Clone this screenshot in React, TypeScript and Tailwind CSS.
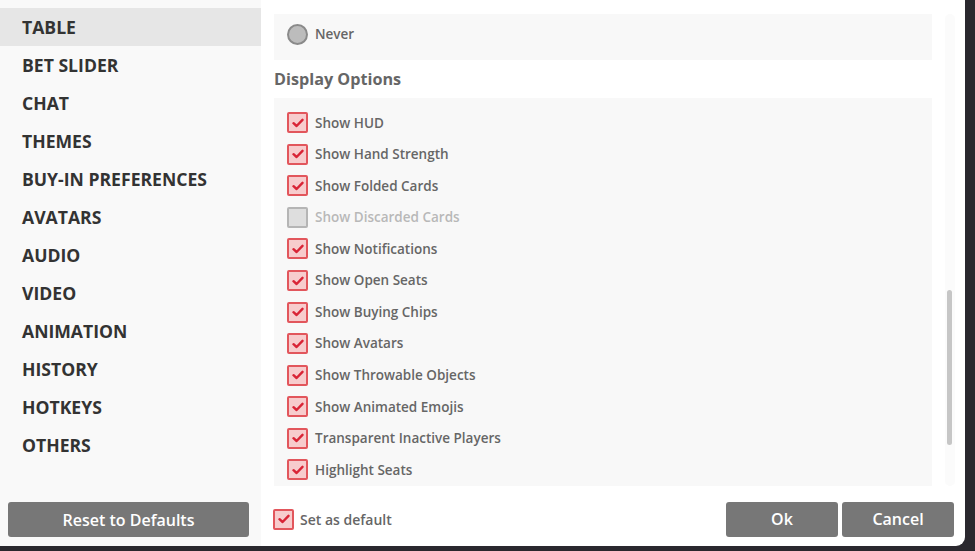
import React from "react"

const menu = [
  "TABLE",
  "BET SLIDER",
  "CHAT",
  "THEMES",
  "BUY-IN PREFERENCES",
  "AVATARS",
  "AUDIO",
  "VIDEO",
  "ANIMATION",
  "HISTORY",
  "HOTKEYS",
  "OTHERS",
]

const options: { label: string; checked: boolean; disabled?: boolean }[] = [
  { label: "Show HUD", checked: true },
  { label: "Show Hand Strength", checked: true },
  { label: "Show Folded Cards", checked: true },
  { label: "Show Discarded Cards", checked: false, disabled: true },
  { label: "Show Notifications", checked: true },
  { label: "Show Open Seats", checked: true },
  { label: "Show Buying Chips", checked: true },
  { label: "Show Avatars", checked: true },
  { label: "Show Throwable Objects", checked: true },
  { label: "Show Animated Emojis", checked: true },
  { label: "Transparent Inactive Players", checked: true },
  { label: "Highlight Seats", checked: true },
]

function Checkbox({ checked, disabled }: { checked: boolean; disabled?: boolean }) {
  if (disabled) {
    return <div className="w-[21px] h-[21px] border-2 border-[#b5b5b5] bg-[#dedede] rounded-[2px]" />
  }
  return (
    <div className="w-[21px] h-[21px] border-2 border-[#e2565c] bg-[#f7cccd] rounded-[2px] flex items-center justify-center">
      {checked && (
        <svg width="12" height="10" viewBox="0 0 12 10">
          <path d="M1.5 5.2 L4.6 8 L10.5 1.8" fill="none" stroke="#d92436" strokeWidth="2.4" strokeLinecap="round" strokeLinejoin="round" />
        </svg>
      )}
    </div>
  )
}

export default function App() {
  return (
    <div className="w-[975px] h-[551px] bg-[#2a282e] overflow-hidden" style={{ fontFamily: '"Open Sans", sans-serif' }}>
      <div className="w-[965px] h-[546px] bg-white rounded-br-[9px] flex overflow-hidden">
        {/* Sidebar */}
        <div className="w-[261px] bg-[#f9f9f9] flex flex-col pt-[8px]">
          {menu.map((m, i) => (
            <div
              key={m}
              className={
                "h-[38px] flex items-center px-[22px] text-[17.6px] font-bold text-[#333] " +
                (i === 0 ? "bg-[#e6e6e6]" : "")
              }
            >
              {m}
            </div>
          ))}
          <div className="mt-auto px-[8px] pb-[9px]">
            <button className="w-[241px] h-[35px] bg-[#777] rounded-[3px] text-white text-[16px] font-semibold">
              Reset to Defaults
            </button>
          </div>
        </div>

        {/* Main */}
        <div className="flex-1 flex flex-col">
          <div className="flex h-[490px]">
            <div className="w-[671px] pl-[13px] pt-[14px]">
              <div className="h-[46px] bg-[#f8f8f8] flex items-center px-[13px] pb-[5px] gap-[7px]">
                <div className="w-[21px] h-[21px] rounded-full border-2 border-[#8a8a8a] bg-[#bcbcbc]" />
                <span className="text-[13.5px] font-semibold text-[#666]">Never</span>
              </div>
              <div className="h-[38px] flex items-center text-[16.2px] font-bold text-[#666]">Display Options</div>
              <div className="h-[388px] bg-[#f8f8f8] pt-[9px] px-[13px]">
                {options.map((o) => (
                  <div key={o.label} className="h-[31.55px] flex items-center gap-[7px]">
                    <Checkbox checked={o.checked} disabled={o.disabled} />
                    <span className={"text-[13.5px] font-semibold " + (o.disabled ? "text-[#b8b8b8]" : "text-[#666]")}>
                      {o.label}
                    </span>
                  </div>
                ))}
              </div>
            </div>
            <div className="w-[33px] flex justify-center pl-[2px] pt-[14px] pb-[4px]">
              <div className="w-[10px] h-full bg-[#fbfbfb] rounded-full pt-[276px]">
                <div className="mx-auto w-[5px] h-[155px] bg-[#c6c6c6] rounded-full" />
              </div>
            </div>
          </div>
          <div className="flex-1 flex items-center pl-[12px] pr-[11px] pt-[2px]">
            <Checkbox checked />
            <span className="ml-[6px] text-[14px] font-semibold text-[#666]">Set as default</span>
            <div className="ml-auto flex gap-[4px]">
              <button className="w-[112px] h-[35px] bg-[#777] rounded-[3px] text-white text-[16px] font-semibold">Ok</button>
              <button className="w-[112px] h-[35px] bg-[#777] rounded-[3px] text-white text-[16px] font-semibold">Cancel</button>
            </div>
          </div>
        </div>
      </div>
    </div>
  )
}
